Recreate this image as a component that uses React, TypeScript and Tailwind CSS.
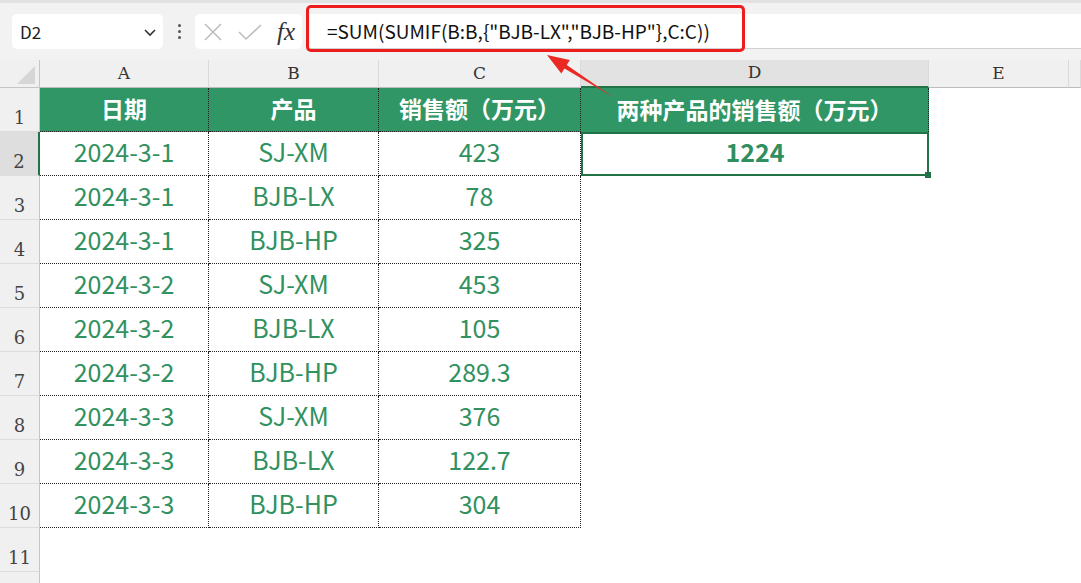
import React from "react";

const rows = [
  ["2024-3-1", "SJ-XM", "423"],
  ["2024-3-1", "BJB-LX", "78"],
  ["2024-3-1", "BJB-HP", "325"],
  ["2024-3-2", "SJ-XM", "453"],
  ["2024-3-2", "BJB-LX", "105"],
  ["2024-3-2", "BJB-HP", "289.3"],
  ["2024-3-3", "SJ-XM", "376"],
  ["2024-3-3", "BJB-LX", "122.7"],
  ["2024-3-3", "BJB-HP", "304"],
];

const formula = '=SUM(SUMIF(B:B,{"BJB-LX","BJB-HP"},C:C))';

const cjk = { fontFamily: '"Noto Sans CJK SC", "Noto Sans", sans-serif' };
const serif = { fontFamily: '"DejaVu Serif", "Liberation Serif", serif' };

function RowHead({ n, active }: { n?: number; active?: boolean }) {
  return (
    <div
      style={serif}
      className={
        "flex h-[44px] items-end justify-center border-b border-[#dcdcdc] text-[18px] text-[#444] " +
        (active ? "bg-[#dedede] border-r-2 border-r-[#217346]" : "bg-[#f0f0f0] border-r border-r-[#c6c6c6]")
      }
    >
      {n}
    </div>
  );
}

function ColHead({ label, active }: { label: string; active?: boolean }) {
  return (
    <div
      style={serif}
      className={
        "flex h-[28px] items-center justify-center border-r border-[#dadada] text-[17px] text-[#333] " +
        (active ? "bg-[#e2e2e2] border-b-2 border-b-[#217346]" : "bg-[#f0f0f0] border-b border-b-[#bdbdbd]")
      }
    >
      {label}
    </div>
  );
}

export default function App() {
  return (
    <div className="relative h-[583px] w-[1081px] overflow-hidden bg-white" style={cjk}>
      {/* toolbar */}
      <div className="flex h-[60px] items-center border-t-[3px] border-[#e2e2e2] bg-[#f2f2f2] pl-[12px]">
        <div className="flex h-[35px] w-[151px] items-center justify-between rounded-[5px] bg-white pl-[8px] pr-[6px] text-[17px] text-[#222]">
          <span>D2</span>
          <svg width="14" height="14" viewBox="0 0 14 14" fill="none" stroke="#333" strokeWidth="1.6">
            <path d="M2 5l5 5 5-5" />
          </svg>
        </div>
        <div className="flex w-[32px] flex-col items-center justify-center gap-[3px]">
          <span className="h-[3px] w-[3px] rounded-full bg-[#555]" />
          <span className="h-[3px] w-[3px] rounded-full bg-[#555]" />
          <span className="h-[3px] w-[3px] rounded-full bg-[#555]" />
        </div>
        <div className="flex h-[35px] w-[107px] items-center gap-[14px] rounded-[5px] bg-white pl-[8px]">
          <svg width="20" height="20" viewBox="0 0 20 20" stroke="#bdbdbd" strokeWidth="1.6" fill="none">
            <path d="M2 2l16 16M18 2L2 18" />
          </svg>
          <svg width="26" height="20" viewBox="0 0 26 20" stroke="#bdbdbd" strokeWidth="1.6" fill="none">
            <path d="M2 10l7 7L24 3" />
          </svg>
          <span
            className="text-[25px] italic leading-none text-[#333]"
            style={{ fontFamily: '"Liberation Serif", "DejaVu Serif", serif' }}
          >
            fx
          </span>
        </div>
        <div className="ml-[8px] flex h-[35px] flex-1 items-center border-b border-[#d0d0d0] bg-white pl-[17px] text-[19px] text-[#111]">
          {formula}
        </div>
      </div>

      {/* sheet */}
      <div className="grid grid-cols-[40px_169px_170px_202px_348px_140px_1fr]">
        <div className="relative h-[28px] border-b border-r border-[#c6c6c6] bg-[#f0f0f0]">
          <svg className="absolute bottom-[3px] right-[4px]" width="18" height="18" viewBox="0 0 18 18">
            <path d="M18 0V18H0Z" fill="#d6d6d6" />
          </svg>
        </div>
        <ColHead label="A" />
        <ColHead label="B" />
        <ColHead label="C" />
        <ColHead label="D" active />
        <ColHead label="E" />
        <ColHead label="" />

        {/* row 1 */}
        <RowHead n={1} />
        {["日期", "产品", "销售额（万元）"].map((h) => (
          <div
            key={h}
            className="flex h-[44px] items-center justify-center border-b border-r border-dotted border-[#222] bg-[#319665] pb-[2px] text-[23px] font-bold text-white"
          >
            {h}
          </div>
        ))}
        <div className="flex h-[44px] items-center justify-center border-r border-dotted border-[#222] bg-[#319665] pb-[2px] text-[23px] font-bold text-white">
          两种产品的销售额（万元）
        </div>
        <div />
        <div />

        {rows.map((r, i) => (
          <React.Fragment key={i}>
            <RowHead n={i + 2} active={i === 0} />
            {r.map((c, j) => (
              <div
                key={j}
                className="flex h-[44px] items-center justify-center border-b border-r border-dotted border-[#222] pb-[4px] text-[25px] text-[#31915f]"
              >
                {c}
              </div>
            ))}
            {i === 0 ? (
              <div className="relative flex h-[44px] items-center justify-center border-2 border-[#217346] pb-[4px] text-[25px] font-bold text-[#2f8f5f]">
                1224
                <span className="absolute -bottom-[4px] -right-[4px] h-[6px] w-[6px] bg-[#217346]" />
              </div>
            ) : (
              <div />
            )}
            <div />
            <div />
          </React.Fragment>
        ))}
        <RowHead n={11} />
        <div />
        <div />
        <div />
        <div />
        <div />
        <div />
        <RowHead />
      </div>

      {/* annotation */}
      <div className="pointer-events-none absolute left-[306px] top-[5px] h-[47px] w-[439px] rounded-[5px] border-[3.5px] border-[#ee1c1c]" />
      <svg className="pointer-events-none absolute left-0 top-0" width="1081" height="583">
        <polygon
          points="613,97 566.7,65 569.9,59.9 547,55 561.3,73.5 564.5,68.4"
          fill="#ea2a22"
        />
      </svg>
    </div>
  );
}
